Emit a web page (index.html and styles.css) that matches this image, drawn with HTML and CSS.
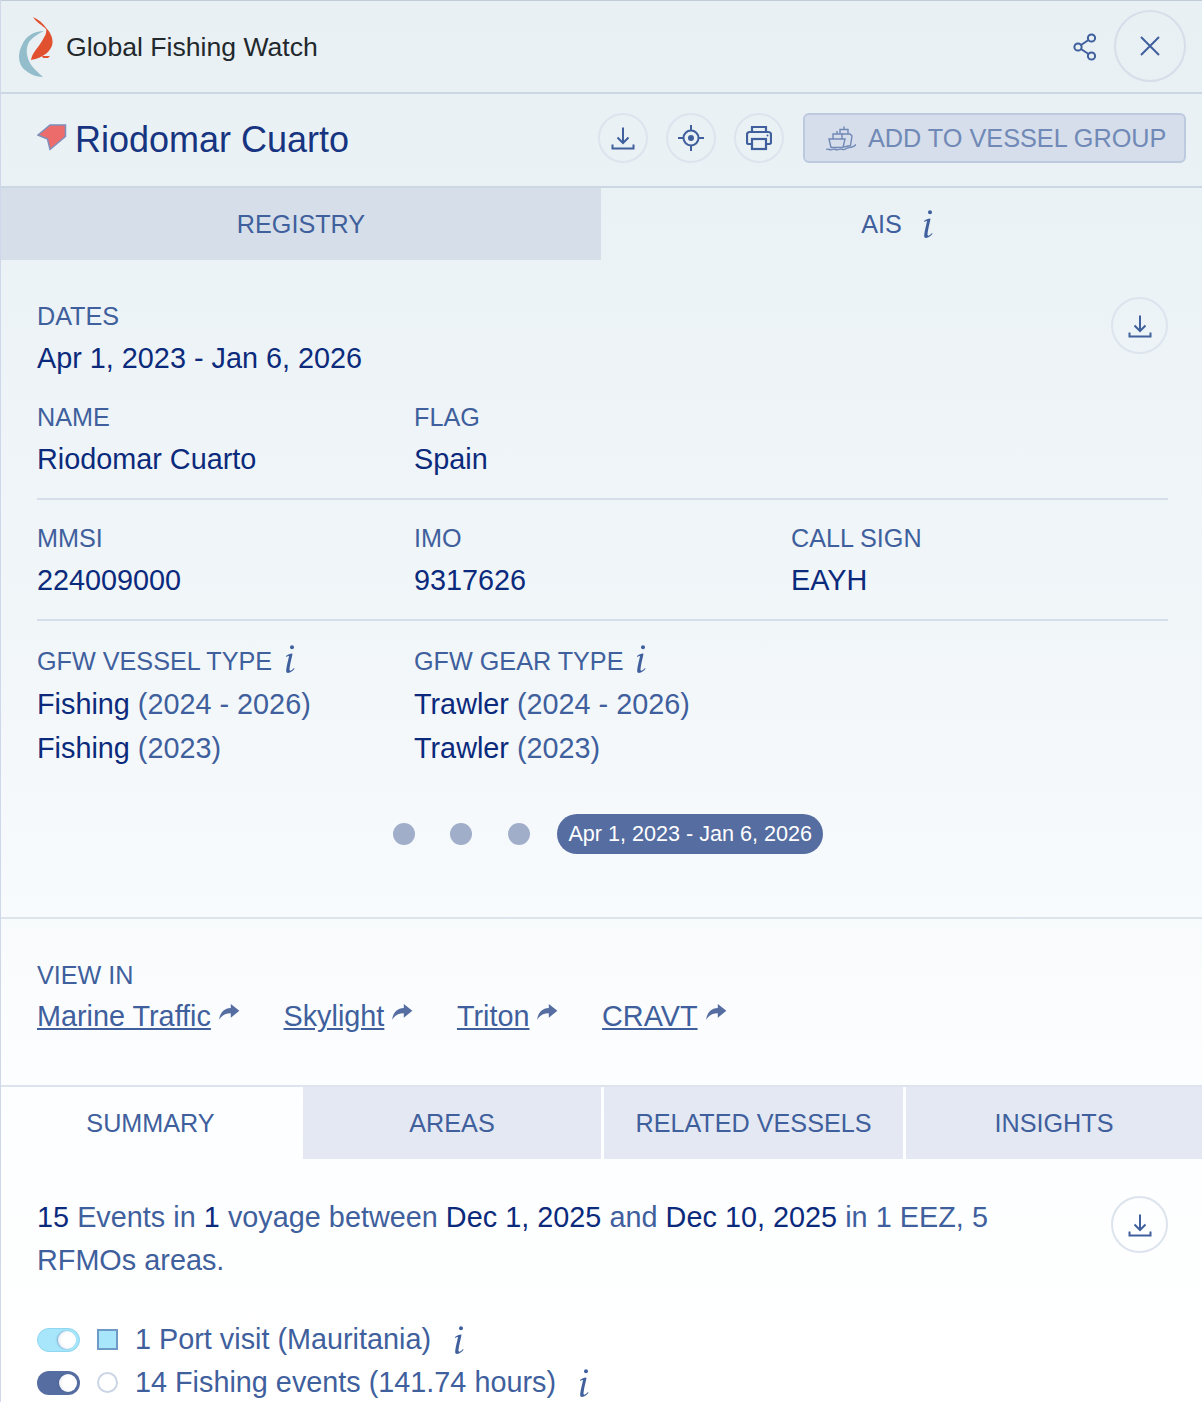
FILE: index.html
```html
<!DOCTYPE html>
<html lang="en">
<head>
<meta charset="utf-8">
<title>Riodomar Cuarto</title>
<link rel="stylesheet" href="styles.css">
</head>
<body>
<svg class="defs" aria-hidden="true">
  <symbol id="dl" viewBox="0 0 24 24"><path d="M12 1.500V16.500M6.500 11.500 12 17l5.500-5.500M1.500 18.500V22.500H22.500V18.500" fill="none" stroke="currentColor" stroke-width="2"/></symbol>
  <symbol id="info" viewBox="0 0 12 30"><circle cx="8" cy="3.200" r="2" fill="currentColor"/><path d="M2 12C4 10.500 6 9.500 8 9.500L8.500 10C7.500 15 6 20 5.500 25 5.400 26.500 6 27 7 26.500 8 26 9 25 10 24L10.500 24.800C9 26.500 6.500 29 4 29 2.500 29 2 27.800 2.200 26 2.800 21 4.200 16.500 5 12 4.500 11.800 3 12.500 2.300 13Z" fill="currentColor"/></symbol>
  <symbol id="ext" viewBox="0 0 24 20"><path d="M14 1 23.500 8.500 14 16.500V11.500C8.500 11.500 4.500 13.500 1 18.500 2 11 6.500 5.500 14 5.500Z" fill="currentColor"/></symbol>
</svg>
<main class="panel">
  <header class="brand">
    <svg class="logo" viewBox="18 16 35 60" aria-hidden="true">
      <path d="M44 30C34 30 26 35 22 44 18 52 18 60 22 66 27 72 35 76 43 76 38 71 32 67 29 60 26 53 26 47 29 41 33 36 38 33 44 30Z" fill="#94bdcb"/>
      <path d="M33 16C38 18 43 22 47 28 51 32 53 38 52.500 42 52 49 44 57 31 59 32 52 38 47 42 40 45 35 47 32 46 28 42 24 36 21 33 16Z" fill="#e2512f"/>
      <path d="M42 55H50L48 57H43Z" fill="#e2512f"/>
    </svg>
    <span class="brand-name">Global Fishing Watch</span>
    <svg class="share" viewBox="0 0 24 28" aria-hidden="true"><g fill="none" stroke="currentColor" stroke-width="2"><circle cx="18.500" cy="5" r="3.600"/><circle cx="5" cy="14" r="3.600"/><circle cx="18.500" cy="23" r="3.600"/><path d="M8 12 15.500 7M8 16 15.500 21"/></g></svg>
    <button class="close" aria-label="Close"><svg viewBox="0 0 20 20" aria-hidden="true"><path d="M1 1 19 19M19 1 1 19" fill="none" stroke="currentColor" stroke-width="2"/></svg></button>
  </header>

  <section class="vessel">
    <svg class="flag" viewBox="0 0 30 30" aria-hidden="true"><path d="M1 14 13 4H28.500V15.500L13 28.500 10.500 18Z" fill="#ec6c6c" stroke="#7d8fbb" stroke-width="1.500"/></svg>
    <h1>Riodomar Cuarto</h1>
    <button class="round r50"><svg class="ic" viewBox="0 0 24 24"><use href="#dl"/></svg></button>
    <button class="round r50"><svg class="ic ic-target" viewBox="0 0 26 26" aria-hidden="true"><g fill="none" stroke="currentColor" stroke-width="2"><circle cx="13" cy="13" r="7.500"/><path d="M13 0V5.500M13 20.500V26M0 13H5.500M20.500 13H26"/></g><circle cx="13" cy="13" r="3" fill="currentColor"/></svg></button>
    <button class="round r50 r50-last"><svg class="ic ic-print" viewBox="0 0 26 26" aria-hidden="true"><g fill="none" stroke="currentColor" stroke-width="2.200"><path d="M6 7V2H20V7"/><path d="M6 19H2.500A1.500 1.500 0 0 1 1 17.500V9.500A2.500 2.500 0 0 1 3.500 7H22.500A2.500 2.500 0 0 1 25 9.500V17.500A1.500 1.500 0 0 1 23.500 19H20"/><rect x="6" y="14" width="14" height="10"/></g><circle cx="21.500" cy="10.500" r="1" fill="currentColor"/></svg></button>
    <button class="add-group">
      <svg class="ships" viewBox="0 0 30 25" aria-hidden="true"><g fill="none" stroke="currentColor" stroke-width="1.400"><path d="M0 23.500C2.500 22 4 25 6.500 23.500S10.500 25 13 23.500 17 25 19.500 23 24 21.500 26 21 28.500 20.500 30 18.500"/><path d="M3 13H19L17 21.500H5Z"/><path d="M7 13V8H16V13M11 8V5"/><path d="M14 8V3.500H22V8M18 3.500V.5M16 8H24L26 10 24.500 19.500 18 21"/></g></svg>
      <span>ADD TO VESSEL GROUP</span>
    </button>
  </section>

  <nav class="tabs-main">
    <div class="tab-main off">REGISTRY</div>
    <div class="tab-main tab-ais">AIS <svg class="info"><use href="#info"/></svg></div>
  </nav>

  <section class="identity">
    <button class="round r57 corner"><svg class="ic" viewBox="0 0 24 24"><use href="#dl"/></svg></button>
    <div class="row first">
      <div class="field"><div class="label">DATES</div><div class="value">Apr 1, 2023 - Jan 6, 2026</div></div>
    </div>
    <div class="row second ruled">
      <div class="field"><div class="label">NAME</div><div class="value">Riodomar Cuarto</div></div>
      <div class="field"><div class="label">FLAG</div><div class="value">Spain</div></div>
    </div>
    <div class="row third ruled">
      <div class="field"><div class="label">MMSI</div><div class="value">224009000</div></div>
      <div class="field"><div class="label">IMO</div><div class="value">9317626</div></div>
      <div class="field"><div class="label">CALL SIGN</div><div class="value">EAYH</div></div>
    </div>
    <div class="row types">
      <div class="field">
        <div class="label label-info">GFW VESSEL TYPE <svg class="info"><use href="#info"/></svg></div>
        <div class="value">Fishing <span class="muted">(2024 - 2026)</span></div>
        <div class="value">Fishing <span class="muted">(2023)</span></div>
      </div>
      <div class="field">
        <div class="label label-info">GFW GEAR TYPE <svg class="info"><use href="#info"/></svg></div>
        <div class="value">Trawler <span class="muted">(2024 - 2026)</span></div>
        <div class="value">Trawler <span class="muted">(2023)</span></div>
      </div>
    </div>
    <div class="timeline">
      <span class="dot"></span><span class="dot"></span><span class="dot"></span>
      <span class="pill">Apr 1, 2023 - Jan 6, 2026</span>
    </div>
  </section>

  <section class="view-in">
    <div class="label">VIEW IN</div>
    <div class="links">
      <span class="ext-wrap"><a href="#">Marine Traffic</a><svg class="ext"><use href="#ext"/></svg></span>
      <span class="ext-wrap"><a href="#">Skylight</a><svg class="ext"><use href="#ext"/></svg></span>
      <span class="ext-wrap"><a href="#">Triton</a><svg class="ext"><use href="#ext"/></svg></span>
      <span class="ext-wrap"><a href="#">CRAVT</a><svg class="ext"><use href="#ext"/></svg></span>
    </div>
  </section>

  <nav class="tabs-sub">
    <div class="tab-sub on">SUMMARY</div>
    <div class="tab-sub">AREAS</div>
    <div class="tab-sub">RELATED VESSELS</div>
    <div class="tab-sub">INSIGHTS</div>
  </nav>

  <section class="summary">
    <button class="round r57 corner"><svg class="ic" viewBox="0 0 24 24"><use href="#dl"/></svg></button>
    <p class="lead"><b>15</b> Events in <b>1</b> voyage between <b>Dec 1, 2025</b> and <b>Dec 10, 2025</b> in 1 EEZ, 5 RFMOs areas.</p>
    <div class="event">
      <span class="switch sw-port"><span class="knob"></span></span>
      <span class="sq"></span>
      <span class="event-text">1 Port visit (Mauritania)</span>
      <svg class="info"><use href="#info"/></svg>
    </div>
    <div class="event">
      <span class="switch sw-fish"><span class="knob"></span></span>
      <span class="circ"></span>
      <span class="event-text">14 Fishing events (141.74 hours)</span>
      <svg class="info"><use href="#info"/></svg>
    </div>
  </section>
</main>
</body>
</html>
```

FILE: styles.css
```css
* { box-sizing: border-box; }
html, body { margin: 0; padding: 0; height: 1402px; overflow: hidden; }
body { font-family: "Liberation Sans", Arial, sans-serif; color: #0b2a7c; background: #fff; }
.defs { display: none; }
button { font-family: inherit; padding: 0; cursor: pointer; }

.panel {
  height: 1402px;
  overflow: hidden;
  border-left: 1px solid #cfd8e8;
  background: linear-gradient(180deg, #e8f0f3 0%, #f1f6f9 45%, #fdfeff 80%, #ffffff 100%);
}

.brand {
  display: flex;
  align-items: center;
  height: 94px;
  border-top: 1px solid #bfcbd8;
  border-bottom: 2px solid #ccd7e4;
  padding: 0 16px 0 17px;
}
.logo { width: 35px; height: 60px; margin-right: 13px; }
.brand-name { font-size: 26.600px; color: #22282c; flex: 1; margin-top: 2px; }
.share { width: 24px; height: 28px; color: #3f5f9d; margin-right: 17px; }
.close {
  width: 72px; height: 72px; border-radius: 50%;
  border: 2px solid #d6deea; background: transparent; color: #3f5f9d;
  display: flex; align-items: center; justify-content: center;
  margin-top: -2px;
}
.close svg { width: 20px; height: 20px; }

.vessel {
  display: flex;
  align-items: center;
  height: 94px;
  padding: 0 16px 4px 36px;
  border-bottom: 2px solid #ccd7e4;
}
.flag { width: 30px; height: 30px; margin-right: 8px; margin-top: -4px; }
h1 { font-weight: 400; font-size: 36px; margin: 4px 0 0; color: #173481; flex: 1; }
.round {
  border-radius: 50%;
  border: 2px solid #dde4ee;
  background: transparent;
  color: #3f5f9d;
  display: flex; align-items: center; justify-content: center;
  flex: none;
}
.r50 { width: 50px; height: 50px; margin-right: 18px; }
.r50-last { margin-right: 19px; }
.r57 { width: 57px; height: 57px; }
.ic { width: 24px; height: 24px; }
.ic-target { width: 26px; height: 26px; }
.ic-print { width: 26px; height: 26px; }
.add-group {
  width: 383px; height: 50px;
  display: flex; align-items: center; gap: 12px;
  padding-left: 21px;
  border: 2px solid #bdc9de;
  border-radius: 6px;
  background: #d5deea;
  color: #7189b6;
  font-size: 25.250px;
}
.ships { width: 30px; height: 25px; flex: none; }

.tabs-main { display: flex; height: 72px; }
.tab-main {
  flex: 1;
  display: flex; align-items: center; justify-content: center;
  font-size: 25.200px; color: #3f5f9d;
  gap: 20px;
}
.tab-main.off { flex: none; width: 600px; background: #d6dfe9; }
.tab-ais { padding-right: 8px; }
.info { width: 12px; height: 30px; color: #3f5f9d; flex: none; }

.identity {
  position: relative;
  height: 659px;
  padding: 37px 34px 0 36px;
  border-bottom: 2px solid #dde4ee;
}
.corner { position: absolute; top: 37px; right: 34px; }
.row { display: grid; grid-template-columns: repeat(3, 377px); }
.first { height: 101px; }
.ruled { border-bottom: 2px solid #d5deea; }
.second { height: 102px; }
.third { height: 121px; padding-top: 19px; }
.types { padding-top: 18px; height: 193px; }
.label { font-size: 25.200px; line-height: 38px; color: #3f5f9d; }
.label-info { display: flex; align-items: center; gap: 12px; height: 43px; }
.label-info .info { margin-top: -3px; }
.value { font-size: 28.800px; line-height: 44px; color: #0b2a7c; }
.label + .value { margin-top: 1px; }
.label-info + .value { margin-top: 0; }
.muted { color: #3f5f9d; }

.timeline { display: flex; align-items: center; justify-content: center; gap: 35.500px; height: 40px; margin-left: 11px; }
.dot { width: 22px; height: 22px; border-radius: 50%; background: #a0aeca; }
.pill {
  height: 40px; line-height: 40px; padding: 0 11px;
  border-radius: 20px;
  background: #556da0;
  color: #fff;
  font-size: 21.600px;
  margin-left: -8px;
}

.view-in { height: 166px; padding: 37px 34px 0 36px; }
.links { display: flex; gap: 43.600px; font-size: 28.800px; line-height: 44px; }
.links a { color: #3f5f9d; text-decoration: underline; }
.ext-wrap { display: inline-flex; align-items: flex-start; gap: 7px; }
.ext { width: 22px; height: 18px; color: #556da0; margin-top: 9px; }

.tabs-sub { display: grid; grid-template-columns: 299px 298px 299px 296px; column-gap: 3px; height: 74px; border-top: 2px solid #dde4ee; }
.tab-sub {
  display: flex; align-items: center; justify-content: center;
  background: #e4e8f2;
  color: #3f5f9d;
  font-size: 25.200px;
}
.tab-sub.on { background: transparent; }

.summary { position: relative; padding: 37px 34px 0 36px; }
.lead { margin: 0 0 36px; width: 980px; font-size: 28.800px; line-height: 43px; color: #3f5f9d; word-spacing: .1px; }
.lead b { font-weight: 400; color: #0b2a7c; }
.event { display: flex; align-items: center; height: 43px; font-size: 28.800px; color: #3f5f9d; }
.switch {
  width: 43px; height: 24px; border-radius: 12px;
  display: flex; align-items: center; justify-content: flex-end;
  padding-right: 3px; margin-right: 17px; flex: none;
}
.sw-port { background: #a8e6fb; border: 1px solid #8fd6f0; }
.sw-fish { background: #556da0; }
.knob { width: 18px; height: 18px; border-radius: 50%; background: radial-gradient(circle at 60% 50%, #fff 50%, #d8dcec 100%); box-shadow: -1px 0 2px rgba(60,80,130,.4); }
.sq { width: 21px; height: 21px; background: #a8e6fb; border: 2px solid #6f9ac6; margin-right: 17px; flex: none; }
.circ { width: 21px; height: 21px; border-radius: 50%; background: #fff; border: 2px solid #ccd5e6; margin-right: 17px; flex: none; }
.event-text { margin-right: 22px; }
```
